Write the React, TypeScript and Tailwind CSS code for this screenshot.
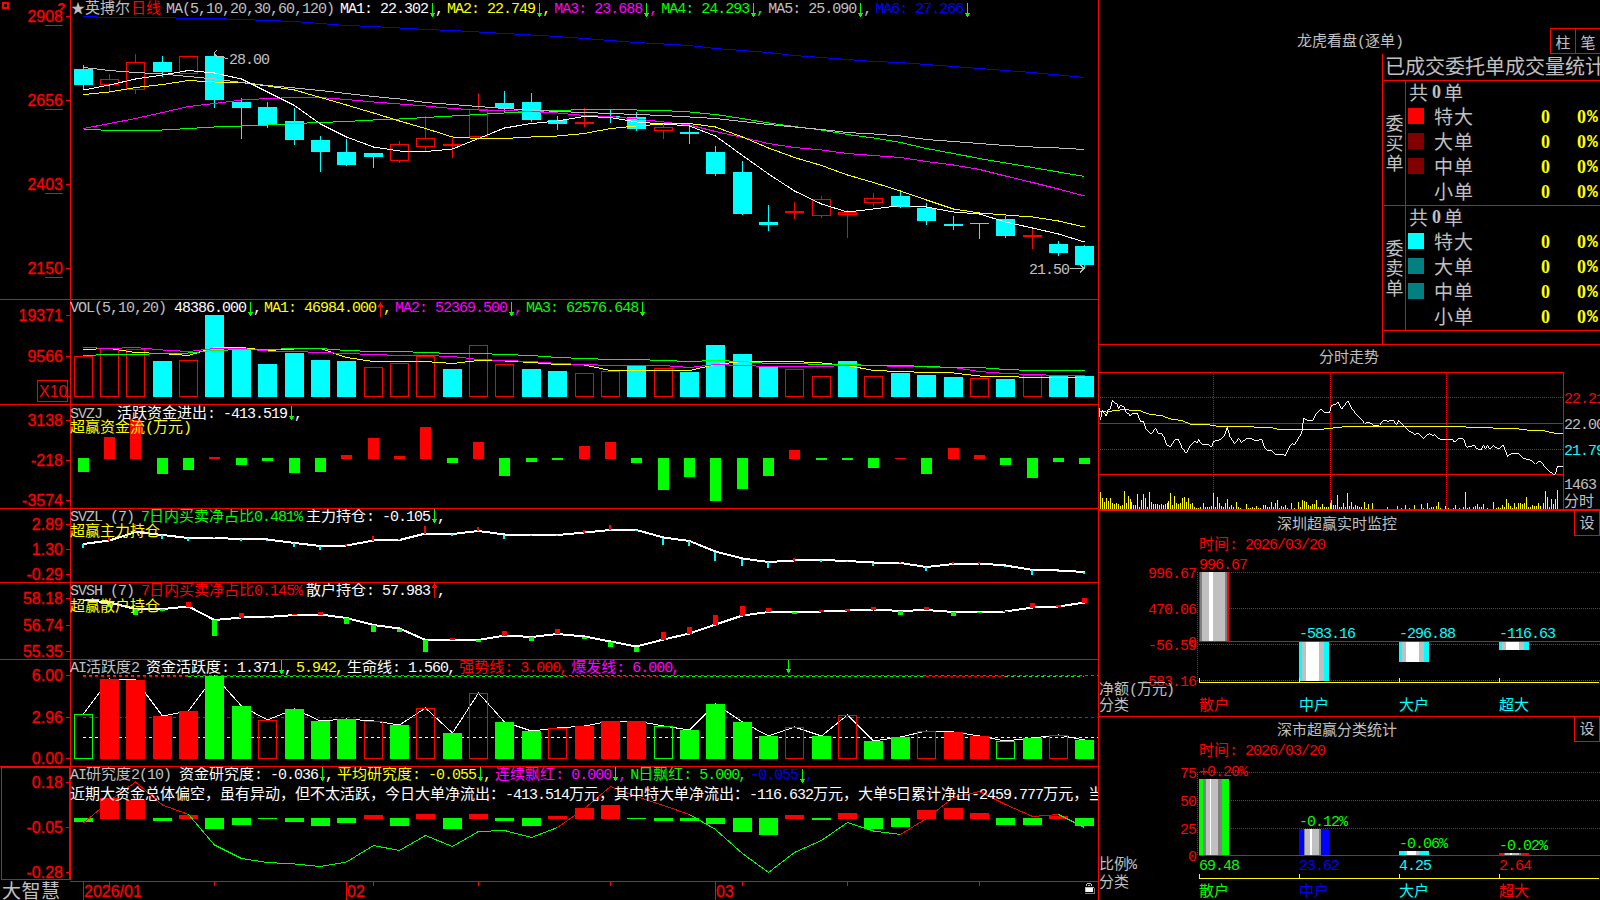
import { Fragment, type ReactNode } from "react";
import clsx from "clsx";

const RED = "#ff0000";
const GREEN = "#00ff00";
const CYAN = "#00ffff";
const YELLOW = "#ffff00";
const MAGENTA = "#ff00ff";
const BLUE = "#0000ff";
const GREY = "#c0c0c0";
const DARK = "#808080";
const WHITE = "#ffffff";

// left edge of each trading day's column
const columns = [74, 100, 126, 153, 179, 205, 232, 258, 285, 311, 337, 364, 390, 416, 443, 469, 495, 522, 548, 575, 601, 627, 654, 680, 706, 733, 759, 785, 812, 838, 864, 891, 917, 944, 970, 996, 1023, 1049, 1075];
const STEP = 26.335;
const left = (i: number) => columns[i];
const mid = (i: number) => left(i) + 9.5;

// [body top, body bottom, wick top, wick bottom, rising]
const candles = [
  [69, 85, 65, 90, 0], [79, 85, 74, 92, 1], [62, 90, 54, 94, 1], [62, 72, 56, 77, 0], [56, 74, 56, 74, 1],
  [56, 100, 53, 108, 0], [102, 108, 98, 139, 0], [107, 125, 102, 128, 0], [121, 140, 108, 145, 0], [140, 152, 136, 172, 0],
  [152, 165, 139, 166, 0], [153, 157, 153, 168, 0], [144, 161, 141, 163, 1], [138, 147, 116, 151, 1], [144, 146, 138, 158, 1],
  [109, 137, 93, 140, 1], [103, 108, 91, 113, 0], [102, 120, 93, 122, 0], [120, 124, 116, 130, 0], [122, 124, 108, 127, 1],
  [116, 117, 110, 123, 0], [117, 129, 112, 131, 0], [127, 131, 124, 139, 1], [132, 134, 126, 144, 0], [152, 174, 146, 176, 0],
  [172, 214, 161, 215, 0], [222, 225, 205, 231, 0], [211, 213, 202, 219, 1], [199, 216, 196, 218, 1], [212, 215, 210, 238, 1],
  [198, 203, 193, 206, 1], [196, 207, 191, 208, 0], [208, 221, 203, 225, 0], [224, 226, 216, 230, 0], [223, 224, 223, 239, 0],
  [219, 236, 216, 238, 0], [235, 237, 229, 249, 1], [244, 253, 241, 256, 0], [246, 265, 245, 269, 0],
];

const ma5 = [90, 85, 79, 75, 70.5, 73, 79, 92, 105.5, 124, 137, 147, 151, 151.5, 149, 138.5, 128, 123.5, 121, 116.5, 117.5, 122, 124, 126, 136, 155.5, 174, 191, 204, 212, 209, 205.5, 207, 212, 214, 222, 228, 234, 242];
const ma10 = [94.5, 92, 87.5, 84.5, 80.5, 82, 82.5, 86, 90, 97.5, 105, 113, 121, 128.5, 137, 138.5, 138.5, 137, 136, 133.5, 128.5, 126, 124, 123.5, 127, 137, 148, 157.5, 165.5, 175, 182.5, 191, 200, 209, 213, 215, 217, 221, 227];
const ma20 = [128.5, 123.5, 118.5, 112.5, 106.5, 103.5, 100, 98.5, 97.5, 97.5, 99.5, 102, 104, 106, 108.5, 110, 110.5, 111.5, 113, 115.5, 116.5, 119, 122, 125, 131.5, 137.5, 143.5, 147.5, 150, 153.5, 155.5, 157.5, 161.5, 165, 169.5, 176, 182.5, 189, 196];
const ma30 = [129, 130.5, 130.5, 130, 128.5, 127, 126, 125, 123.5, 122.5, 121.5, 120, 119, 117.5, 116, 114.5, 113, 111.5, 110.5, 109.5, 109.5, 110, 110.5, 112, 114.5, 118.5, 123, 126.5, 130, 134.5, 138, 142.5, 148.5, 153.5, 158.5, 163, 167.5, 172, 176.5];
const ma60 = [67.5, 70.5, 72.5, 74, 76.5, 79, 82.5, 85.5, 88, 90.5, 93.5, 96.5, 99, 102.5, 104.5, 106.5, 108.5, 110, 111.5, 112.5, 113.5, 114.5, 115.5, 117, 118.5, 121.5, 124.5, 127, 129.5, 132.5, 134, 136, 139.5, 141.5, 143.5, 145.5, 147, 148, 149.5];
const ma120 = [16.5, 17.5, 17.5, 17.5, 18.5, 18.5, 19.5, 20.5, 21.5, 23.5, 25.5, 26.5, 28, 29.5, 30.5, 32, 33.5, 35, 36.5, 38.5, 40.5, 42.5, 44, 45.5, 48.5, 50.5, 52.5, 55.5, 57.5, 59.5, 61.5, 62.5, 64.5, 66.5, 68.5, 70.5, 72.5, 75, 77.5];

const volTop = [356, 348, 349, 361, 360, 315, 349, 364, 353, 360, 361, 367, 363, 356, 369, 345, 364, 369, 371, 373, 371, 366, 368, 372, 345, 354, 367, 369, 376, 361, 376, 373, 375, 377, 378, 379, 375, 376, 376];
// 1 is a rising day
const volUp = "111010000001110110011010000110100010100";
const vol5 = [349.5, 348.5, 352.5, 353.5, 355.5, 347.5, 347.5, 350.5, 349, 348.5, 357.5, 361.5, 361.5, 361.5, 363.5, 360.5, 361, 362.5, 364.5, 365, 370.5, 370.5, 370.5, 370.5, 364.5, 361.5, 361.5, 361.5, 363, 365.5, 370.5, 371.5, 372.5, 373, 376, 376.5, 377.5, 377.5, 377.5];
const vol10 = [347.5, 348.5, 347.5, 350, 351.5, 348.5, 348.5, 351, 351.5, 352.5, 353.5, 354.5, 355.5, 355.5, 356.5, 359.5, 360.5, 361.5, 363.5, 364.5, 365.5, 365.5, 365.5, 367.5, 364.5, 365.5, 366.5, 366.5, 366.5, 365.5, 365.5, 366.5, 367, 367.5, 371.5, 373.5, 374.5, 375.5, 375.5];
const vol20 = [355.5, 354.5, 354.5, 353.5, 353, 350.5, 349.5, 349.5, 348.5, 348.5, 350.5, 351.5, 351.5, 352.5, 353.5, 353.5, 354.5, 355.5, 357.5, 358.5, 359.5, 359.5, 360.5, 361.5, 360.5, 361.5, 363.5, 363.5, 364.5, 364.5, 365.5, 365.5, 366.5, 367.5, 367.5, 369.5, 370.5, 370.5, 370.5];

const flow = [472, 437, 420, 474, 470, 457, 465, 461, 473, 472, 455, 438, 456, 427, 463, 442, 476, 462, 460, 446, 442, 463, 490, 477, 501, 489, 476, 450, 460, 460, 468, 458, 474, 448, 455, 465, 478, 462, 464];

const mainLine = [544, 540.5, 532, 535, 538, 538, 539, 539.5, 543, 546, 545.5, 540.5, 540, 533.5, 534, 531, 534.5, 535, 535, 532.5, 530, 530, 537.5, 541, 551.5, 558.5, 562, 560.5, 560, 561, 562.5, 563, 567, 564, 563.5, 565.5, 570, 570.5, 572];
const mainTick = [548, 536, 524, 539, 541, 536.5, 541, 541, 547, 550, 544, 536, 538.5, 526, 536, 527, 539, 536, 536, 530, 525, 531, 545, 546, 561, 566, 568, 558, 562, 562, 566, 562, 571, 562, 562, 567, 575, 572, 574];

const retailLine = [600, 602.5, 609, 609, 606.5, 620, 617.5, 617, 615, 614.5, 618, 625, 628.5, 640, 640, 640, 635.5, 637, 634, 636.5, 641.5, 646.5, 639.5, 633.5, 624.5, 615.5, 612, 612, 611.5, 610.5, 609.5, 611, 610, 612, 612, 611.5, 607.5, 606.5, 602.5];
const retailTick = [598.5, 606.5, 615, 611, 602, 636, 613, 618, 613.5, 612, 624, 632, 632, 652, 638, 642, 631, 641, 629, 639, 647, 652, 632, 627, 615, 606, 608, 614, 610, 609, 607, 615, 607, 616, 613, 611, 603, 605, 598];

// R/G are filled bars, r/g are outlined
const activeKind = "gRRRRGGrGGGrGrGrGGrRRRgGGGGrGrGGrRRgGrG";
const activeTop = [714, 679, 680, 716, 711, 676, 706, 720, 709, 721, 719, 721, 725, 708, 733, 693, 722, 731, 728, 726, 721, 721, 726, 730, 704, 722, 736, 727, 736, 715, 741, 737, 731, 732, 736, 741, 738, 735, 740];

const research = [822, 798, 800, 821, 815, 829, 825, 819, 822, 826, 823, 815, 826, 814, 829, 814, 821, 826, 816, 808, 805, 819, 821, 821, 824, 832, 835, 815, 820, 813, 829, 827, 810, 808, 813, 825, 825, 816, 826];
const researchLine = [823, 801, 782, 805, 814.5, 845, 858.5, 862.5, 864, 866.5, 862, 845.5, 850.5, 835.5, 846.5, 831.5, 830.5, 837.5, 827.5, 808.5, 786.5, 796.5, 805.5, 814.5, 829.5, 853.5, 872.5, 852.5, 840.5, 822.5, 831, 834.5, 818.5, 797.5, 791.5, 804.5, 816.5, 814.5, 827.5];
const researchRuns: [number, number, string][] = [
  [0, 4, RED], [4, 18, GREEN], [18, 23, RED], [23, 31, GREEN], [31, 37, RED], [37, 38, GREEN],
];
const burstRuns: [number, number, string][] = [
  [0, 4, RED], [4, 18.3, GREEN], [18.3, 22, RED], [22, 32, GREEN], [32, 35, RED], [35, 38, GREEN],
];

// intraday series, three units per pixel
const price = "27,205 31,241 37,211 43,220 49,228 55,208 60,208 67,182 75,188 82,193 86,206 92,196 103,202 110,220 116,220 121,229 128,220 142,220 151,244 160,244 168,268 184,283 196,265 205,280 214,280 224,295 230,316 236,316 241,322 253,301 265,297 277,325 289,340 300,319 308,310 316,302 320,310 326,298 335,313 356,313 365,322 371,304 394,298 405,283 412,262 420,290 434,311 446,295 455,308 468,296 485,295 493,302 516,299 524,325 535,332 545,332 557,343 580,343 586,348 596,325 605,311 614,314 627,292 635,280 641,235 652,241 668,241 680,220 693,208 703,218 719,217 724,196 736,193 745,187 755,208 765,194 773,182 783,202 796,220 812,236 824,250 837,246 853,258 868,256 876,247 884,240 892,244 910,241 920,256 926,241 940,256 955,272 975,283 984,280 1000,295 1018,280 1026,286 1036,284 1045,296 1070,300 1087,297 1092,307 1105,296 1120,296 1130,322 1154,316 1160,326 1174,330 1180,314 1187,326 1193,316 1200,328 1210,316 1222,326 1231,324 1240,314 1252,349 1265,340 1284,340 1300,355 1325,361 1337,373 1345,364 1354,366 1368,385 1390,403 1396,403 1402,379 1418,379";
const average = "27,214 42,214 50,217 63,214 75,211 90,210 110,208 120,211 150,212 165,218 180,223 215,227 245,238 275,241 300,252 355,254 385,259 440,260 540,262 565,268 630,270 695,268 720,265 775,259 1120,259 1130,262 1205,264 1270,265 1310,270 1355,271 1395,280 1418,280";
const ticks = "31:456,37:474,43:486,49:474,55:484,61:474,67:488,73:492,79:490,85:492,91:497,97:494,103:453,109:490,115:468,121:478,125:486,131:495,137:495,142:462,148:501,154:480,160:462,166:474,172:501,178:456,184:486,190:492,196:492,202:492,208:495,214:492,220:495,226:492,232:490,236:484,242:459,248:495,254:468,260:490,266:492,272:490,278:474,284:471,290:486,296:474,302:492,308:490,314:501,320:504,326:504,332:500,340:489,346:502,352:500,358:501,364:498,370:459,376:500,382:471,388:489,394:499,400:500,406:490,412:477,418:500,424:496,430:501,439:486,445:502,451:504,470:492,476:504,482:504,488:500,494:503,500:499,506:504,512:504,520:495,526:494,532:500,538:502,544:486,550:500,556:490,562:480,568:504,574:498,580:502,586:494,592:503,604:489,614:504,625:486,631:500,637:480,643:484,649:486,655:496,661:499,667:493,673:491,679:480,685:500,691:500,697:492,703:502,709:500,715:500,721:489,725:480,731:494,737:494,743:465,749:502,755:500,761:489,767:500,773:459,779:498,785:486,791:500,797:494,803:499,809:501,815:502,823:486,829:503,835:492,848:489,894:502,922:498,934:504,948:495,960:504,975:495,994:492,1000:504,1012:489,1018:503,1024:502,1030:501,1040:497,1046:486,1052:504,1066:498,1075:504,1090:504,1096:495,1108:504,1120:501,1126:456,1132:503,1138:501,1150:500,1156:498,1162:492,1168:502,1174:500,1180:492,1192:504,1210:486,1220:504,1225:500,1231:503,1237:496,1243:500,1249:477,1255:489,1261:499,1267:504,1273:489,1279:502,1285:490,1291:490,1297:492,1303:489,1309:471,1315:500,1321:502,1327:495,1333:497,1339:498,1345:489,1351:498,1360:489,1366:453,1372:471,1378:500,1384:477,1390:492,1396:477,1402:450"
  .split(",")
  .map((pair) => pair.split(":").map(Number));

const mono = "font-['Liberation_Mono','Noto_Sans_CJK_SC',monospace]";
const cjk = "font-['Noto_Sans_CJK_SC',sans-serif]";

// Half-width runs sit on an 8px grid, full-width runs on a 15px grid
const Runs = ({ text }: { text: string }) => (
  <>
    {text.split(/([\u3000-\uffef]+)/).map((run, i) => (
      <Fragment key={i}>
        {i % 2 ? (
          <span className={cjk}>{run}</span>
        ) : (
          <span className="tracking-[-1px]">{run}</span>
        )}
      </Fragment>
    ))}
  </>
);

const Arrow = ({ up }: { up?: boolean }) => (
  <svg viewBox="0 0 8 15" className="h-[15px] w-2 shrink-0 self-center" shapeRendering="crispEdges">
    {up ? (
      <path d="M4 0h1v15h-1zM3 2h3v1h-3zM2 3h5v2h-5z" fill={RED} />
    ) : (
      <path d="M4 0h1v14h-1zM2 10h5v1h-5zM3 11h3v2h-3z" fill={GREEN} />
    )}
  </svg>
);

type Item = { text: string; color: string; arrow?: "up" | "down"; gap?: string; comma?: boolean };

const Legend = ({ items, className }: { items: Item[]; className?: string }) => (
  <div className={clsx("absolute left-[70px] flex h-4 items-baseline whitespace-pre text-[15px] leading-4", mono, className)}>
    {items.map((item) => (
      <div key={item.text} className={clsx("flex items-baseline", item.color, item.gap ?? "ml-[3px]")}>
        <span>
          <Runs text={item.text} />
        </span>
        {item.arrow && <Arrow up={item.arrow === "up"} />}
        {item.comma !== false && <span className="-ml-px w-[9px]">,</span>}
      </div>
    ))}
  </div>
);

const Panel = ({ top, height, className, children, overlay }: {
  top: number;
  height: number;
  className: string;
  children: ReactNode;
  overlay?: ReactNode;
}) => (
  <section className={clsx("relative shrink-0 overflow-hidden border-b border-[#ff0000]", className)}>
    <svg viewBox={`0 ${top} 1098 ${height}`} width={1098} height={height} className="block" shapeRendering="crispEdges">
      <rect x={70} y={top} width={1} height={height} fill={RED} />
      {children}
    </svg>
    {overlay}
  </section>
);

const Scale = ({ marks }: { marks: [string, number][] }) => (
  <g fill={RED}>
    {marks.map(([label, y]) => (
      <g key={label}>
        <rect x={66} y={y} width={4} height={1} />
        <text
          x={63}
          y={y + 6}
          textAnchor="end"
          stroke={RED}
          strokeWidth={0.3}
          className="font-['Liberation_Sans',sans-serif] text-[16px]"
        >
          {label}
        </text>
      </g>
    ))}
  </g>
);

const Line = ({ data, color, width = 1, from = 0 }: { data: number[]; color: string; width?: number; from?: number }) => (
  <polyline points={data.map((y, i) => `${mid(from + i)},${y}`).join(" ")} fill="none" stroke={color} strokeWidth={width} />
);

const Box = ({ x, y, w, h, color, hollow }: { x: number; y: number; w: number; h: number; color: string; hollow?: boolean }) =>
  hollow ? (
    <rect x={x + 0.5} y={y + 0.5} width={w - 1} height={h - 1} fill="none" stroke={color} />
  ) : (
    <rect x={x} y={y} width={w} height={h} fill={color} />
  );

const PricePanel = () => (
  <Panel
    top={0}
    height={299}
    className="h-[300px]"
    overlay={
      <Legend
        className="-top-px"
        items={[
          { text: "★", color: "text-[#c0c0c0]", gap: "ml-px w-[14px] text-[14px]", comma: false },
          { text: "英搏尔", color: "text-[#c0c0c0]", gap: "", comma: false },
          { text: "日线", color: "text-[#ff0000]", gap: "ml-px", comma: false },
          { text: "MA(5,10,20,30,60,120)", color: "text-[#c0c0c0]", gap: "ml-[5px]", comma: false },
          { text: "MA1: 22.302", color: "text-white", arrow: "down", gap: "ml-[6px]" },
          { text: "MA2: 22.749", color: "text-[#ffff00]", arrow: "down" },
          { text: "MA3: 23.688", color: "text-[#ff00ff]", arrow: "down" },
          { text: "MA4: 24.293", color: "text-[#00ff00]", arrow: "down" },
          { text: "MA5: 25.090", color: "text-[#c0c0c0]", arrow: "down" },
          { text: "MA6: 27.266", color: "text-[#0000ff]", arrow: "down", comma: false },
        ]}
      />
    }
  >
    <Scale marks={[["2908", 16], ["2656", 100], ["2403", 184], ["2150", 268]]} />
    {[25, 109, 193, 277].map((y) => (
      <rect key={y} x={45} y={y} width={18} height={1} fill={RED} />
    ))}
    <path d="M3 3h5v5h-5z" fill="none" stroke={RED} strokeWidth={2} />
    <text x={57} y={13} fill={RED} className="font-['Liberation_Sans',sans-serif] text-[14px] font-bold">?</text>
    {candles.map(([a, b, c, d, up], i) => {
      const color = up ? RED : CYAN;
      return (
        <g key={i}>
          {up ? (
            <>
              <rect x={left(i) + 9} y={c} width={1} height={a - c} fill={color} />
              <rect x={left(i) + 9} y={b} width={1} height={d - b} fill={color} />
            </>
          ) : (
            <rect x={left(i) + 9} y={c} width={1} height={d - c} fill={color} />
          )}
          <Box x={left(i)} y={a} w={19} h={b - a} color={color} hollow={!!up && b - a > 2} />
        </g>
      );
    })}
    <Line data={ma120} color={BLUE} />
    <Line data={ma30} color={GREEN} />
    <Line data={ma20} color={MAGENTA} />
    <Line data={ma10} color={YELLOW} />
    <Line data={ma60} color={GREY} />
    <Line data={ma5} color={WHITE} />
    <g fill="none" stroke={GREY}>
      <path d="M228 58h-3l-4-2h-4l-3-3M217 50l-3 3 3 5" />
      <path d="M1070 268.5h14M1080 264.5l4 4-4 4" />
    </g>
    <g fill={GREY} className={clsx(mono, "text-[15px] tracking-[-1px]")}>
      <text x={229} y={64}>28.00</text>
      <text x={1029} y={274}>21.50</text>
    </g>
  </Panel>
);

const VolumePanel = () => (
  <Panel
    top={300}
    height={104}
    className="h-[105px]"
    overlay={
      <Legend
        className="top-px"
        items={[
          { text: "VOL(5,10,20)", color: "text-[#c0c0c0]", gap: "", comma: false },
          { text: "48386.000", color: "text-white", arrow: "down", gap: "ml-2" },
          { text: "MA1: 46984.000", color: "text-[#ffff00]", arrow: "up", gap: "ml-[2px]" },
          { text: "MA2: 52369.500", color: "text-[#ff00ff]", arrow: "down" },
          { text: "MA3: 62576.648", color: "text-[#00ff00]", arrow: "down", comma: false },
        ]}
      />
    }
  >
    <Scale marks={[["19371", 315], ["9566", 356]]} />
    <rect x={66} y={396} width={4} height={1} fill={RED} />
    <Box x={37} y={380} w={31} h={22} color={RED} hollow />
    <text x={39} y={397} fill={RED} className="font-['Liberation_Sans',sans-serif] text-[16px]">X10</text>
    {volTop.map((y, i) => (
      <Box key={i} x={left(i)} y={y} w={19} h={397 - y} color={volUp[i] === "1" ? RED : CYAN} hollow={volUp[i] === "1"} />
    ))}
    <Line data={vol5} color={YELLOW} />
    <Line data={vol10} color={MAGENTA} />
    <Line data={vol20} color={GREEN} />
  </Panel>
);

const FlowPanel = () => (
  <Panel
    top={405}
    height={103}
    className="h-[104px]"
    overlay={
      <>
        <Legend
          className="-top-px"
          items={[
            { text: "SVZJ", color: "text-[#c0c0c0]", gap: "", comma: false },
            { text: "活跃资金进出: -413.519", color: "text-white", arrow: "down", gap: "ml-[15px]" },
          ]}
        />
        <Legend className="top-[13px]" items={[{ text: "超赢资金流(万元)", color: "text-[#ffff00]", gap: "", comma: false }]} />
      </>
    }
  >
    <Scale marks={[["3138", 420], ["-218", 460], ["-3574", 500]]} />
    {flow.map((y, i) =>
      y >= 460 ? (
        <rect key={i} x={left(i) + 4} y={458} width={11} height={y - 458} fill={GREEN} />
      ) : (
        <rect key={i} x={left(i) + 4} y={y} width={11} height={459 - y} fill={RED} />
      ),
    )}
  </Panel>
);

const MainForcePanel = () => (
  <Panel
    top={509}
    height={73}
    className="h-[74px]"
    overlay={
      <>
        <Legend
          className="-top-[2px]"
          items={[
            { text: "SVZL (7)", color: "text-[#c0c0c0]", gap: "", comma: false },
            { text: "7日内买卖净占比0.481%", color: "text-[#00ff00]", gap: "ml-[7px]", comma: false },
            { text: "主力持仓: -0.105", color: "text-white", arrow: "down", gap: "ml-1" },
          ]}
        />
        <Legend className="top-[13px]" items={[{ text: "超赢主力持仓", color: "text-[#ffff00]", gap: "", comma: false }]} />
      </>
    }
  >
    <Scale marks={[["2.89", 524], ["1.30", 549], ["-0.29", 574]]} />
    <Line data={mainLine} color={WHITE} width={2} />
    {mainTick.map((y, i) => {
      const base = mainLine[i];
      return (
        <rect
          key={i}
          x={left(i) + 8}
          y={Math.min(y, base)}
          width={2}
          height={Math.abs(y - base)}
          fill={y > base ? CYAN : RED}
        />
      );
    })}
  </Panel>
);

const RetailPanel = () => (
  <Panel
    top={583}
    height={76}
    className="h-[77px]"
    overlay={
      <>
        <Legend
          className="-top-[2px]"
          items={[
            { text: "SVSH (7)", color: "text-[#c0c0c0]", gap: "", comma: false },
            { text: "7日内买卖净占比0.145%", color: "text-[#ff0000]", gap: "ml-[7px]", comma: false },
            { text: "散户持仓: 57.983", color: "text-white", arrow: "up", gap: "ml-1" },
          ]}
        />
        <Legend className="top-[14px]" items={[{ text: "超赢散户持仓", color: "text-[#ffff00]", gap: "", comma: false }]} />
      </>
    }
  >
    <Scale marks={[["58.18", 598], ["56.74", 625], ["55.35", 651]]} />
    <Line data={retailLine} color={WHITE} width={2} />
    {retailTick.map((y, i) => {
      const base = retailLine[i];
      return (
        <rect
          key={i}
          x={left(i) + 7}
          y={Math.min(y, base)}
          width={5}
          height={Math.abs(y - base)}
          fill={y > base ? GREEN : RED}
        />
      );
    })}
  </Panel>
);

const ActivityPanel = () => (
  <Panel
    top={660}
    height={106}
    className="h-[107px]"
    overlay={
      <Legend
        className="-top-[2px]"
        items={[
          { text: "AI活跃度2", color: "text-[#c0c0c0]", gap: "", comma: false },
          { text: "资金活跃度: 1.371", color: "text-white", arrow: "down", gap: "ml-[7px]" },
          { text: "5.942", color: "text-[#ffff00]" },
          { text: "生命线: 1.560", color: "text-white" },
          { text: "强势线: 3.000", color: "text-[#ff0000]" },
          { text: "爆发线: 6.000", color: "text-[#ff00ff]" },
          { text: "", color: "text-white", arrow: "down", gap: "ml-[104px] self-center", comma: false },
        ]}
      />
    }
  >
    <Scale marks={[["6.00", 675], ["2.96", 717], ["0.00", 758]]} />
    <path d="M83 675.5H1098" stroke={MAGENTA} strokeDasharray="3 3" />
    {burstRuns.map(([a, b, color]) => (
      <path key={a} d={`M${Math.round(83 + a * STEP)} 676.5H${Math.round(83 + b * STEP)}`} stroke={color} strokeDasharray="3 3" />
    ))}
    <path d="M83 717.5H1098" stroke={RED} strokeDasharray="3 3" />
    <path d="M83 737.5H1098" stroke={WHITE} strokeDasharray="3 3" />
    <Line data={activeTop} color={WHITE} />
    {activeTop.map((y, i) => {
      const kind = activeKind[i];
      return (
        <Box
          key={i}
          x={left(i)}
          y={y}
          w={19}
          h={759 - y}
          color={kind.toLowerCase() === "r" ? RED : GREEN}
          hollow={kind === kind.toLowerCase()}
        />
      );
    })}
  </Panel>
);

const ResearchPanel = () => (
  <Panel
    top={767}
    height={113}
    className="h-[114px] border-b-0"
    overlay={
      <>
        <Legend
          className="-top-[2px]"
          items={[
            { text: "AI研究度2(10)", color: "text-[#c0c0c0]", gap: "", comma: false },
            { text: "资金研究度: -0.036", color: "text-white", arrow: "down", gap: "ml-2" },
            { text: "平均研究度: -0.055", color: "text-[#ffff00]", arrow: "down" },
            { text: "连续飘红: 0.000", color: "text-[#ff00ff]", arrow: "down" },
            { text: "N日飘红: 5.000", color: "text-[#00ff00]" },
            { text: "-0.055", color: "text-[#0000ff]", arrow: "down" },
          ]}
        />
        <Legend
          className="top-[18px]"
          items={[
            {
              text: "近期大资金总体偏空，虽有异动，但不太活跃，今日大单净流出：-413.514万元，其中特大单净流出：-116.632万元，大单5日累计净出-2459.777万元，当",
              color: "text-white",
              gap: "",
              comma: false,
            },
          ]}
        />
      </>
    }
  >
    <rect x={1.5} y={767.5} width={68} height={112} fill="none" stroke={RED} />
    <Scale marks={[["0.18", 782], ["-0.05", 827], ["-0.28", 872]]} />
    {research.map((y, i) =>
      y >= 819 ? (
        <rect key={i} x={left(i)} y={818} width={19} height={y - 818} fill={GREEN} />
      ) : (
        <rect key={i} x={left(i)} y={y} width={19} height={819 - y} fill={RED} />
      ),
    )}
    {researchRuns.map(([a, b, color]) => (
      <Line key={a} data={researchLine.slice(a, b + 1)} from={a} color={color} />
    ))}
  </Panel>
);

const DateAxis = () => (
  <footer className="flex h-5 shrink-0">
    <div className={clsx("w-[70px] whitespace-nowrap pl-[2px] text-[19px] leading-[17px] tracking-[0.5px] text-[#c0c0c0]", cjk)}>大智慧</div>
    <svg viewBox="70 880 1028 20" width={1028} height={20} shapeRendering="crispEdges">
      <rect x={70} y={880} width={1028} height={1} fill={RED} />
      {[83, 346, 715].map((x) => (
        <rect key={x} x={x} y={881} width={1} height={19} fill={RED} />
      ))}
      {[109, 214, 373, 478, 610, 742, 847, 979].map((x) => (
        <rect key={x} x={x} y={881} width={1} height={4} fill={RED} />
      ))}
      <g fill={RED} stroke={RED} strokeWidth={0.3} className="font-['Liberation_Sans',sans-serif] text-[16px]">
        <text x={84} y={896}>2026/01</text>
        <text x={347} y={896}>02</text>
        <text x={716} y={896}>03</text>
      </g>
      <path d="M1086 887h7v4h-7z" fill={WHITE} />
      <path d="M1085 886h9v1h-9zM1085 887h1v4h-1zM1086 883h1v2h-1zM1087 882h4v1h-4zM1091 883h1v2h-1zM1088 884h2v1h-2z" fill={GREY} />
      <path d="M1094 887h1v6h-10v-1h9z" fill={DARK} />
    </svg>
  </footer>
);

const serifBold = "font-['Liberation_Serif',serif] text-[18px] font-bold";

const OrderSection = ({ side, colors }: { side: string; colors: string[] }) => (
  <div className="ml-px flex h-[125px] border-t border-[#ff0000]">
    <div className="flex w-[21px] flex-col items-center justify-center pb-[3px] text-[18px] leading-5">
      {side.split("").map((ch) => (
        <span key={ch}>{ch}</span>
      ))}
    </div>
    <div className="flex flex-1 flex-col border-l border-[#ff0000] leading-5">
      <div className="flex h-[23px] items-center pb-[2px] pl-[3px] text-[19px]">
        <span>共</span>
        <span className={clsx("w-4 pl-px text-center", serifBold)}>0</span>
        <span>单</span>
      </div>
      {["特大", "大单", "中单", "小单"].map((name, i) => (
        <div key={name} className="flex h-[25px] items-center pl-[2px]">
          <span className={clsx("mb-px h-4 w-4", colors[i])} />
          <span className="ml-[10px] w-[107px] pb-[2px] text-[19px] tracking-[1px]">{name}</span>
          <span className={clsx("w-9 text-[#ffff00]", serifBold)}>0</span>
          <span className={clsx("text-[#ffff00]", serifBold)}>0</span>
          <span className="ml-px font-['Liberation_Mono',monospace] text-[18px] font-bold text-[#ffff00]">%</span>
        </div>
      ))}
    </div>
  </div>
);

const OrderPanel = () => (
  <section className={clsx("flex h-[345px] shrink-0 flex-col border-b border-[#ff0000] text-[#c0c0c0]", cjk)}>
    <header className="flex h-[54px] shrink-0 items-end">
      <h2 className={clsx("ml-[198px] whitespace-pre pb-[3px] text-[15px] leading-4", mono)}>
        <Runs text="龙虎看盘(逐单)" />
      </h2>
      <div className="ml-auto flex border-y border-l border-[#ff0000] text-[15px]">
        <button className="h-6 w-6 leading-[21px]">柱</button>
        <button className="h-6 w-[25px] border-l border-[#ff0000] leading-[21px]">笔</button>
      </div>
    </header>
    <div className="ml-[283px] flex-1 border-l border-[#ff0000]">
      <h3 className="h-[26px] overflow-hidden whitespace-nowrap pl-[2px] text-[20px] leading-[23px]">已成交委托单成交量统计</h3>
      <OrderSection side="委买单" colors={["bg-[#ff0000]", "bg-[#800000]", "bg-[#800000]", ""]} />
      <OrderSection side="委卖单" colors={["bg-[#00ffff]", "bg-[#008080]", "bg-[#008080]", ""]} />
      <div className="ml-px border-t border-[#ff0000]" />
    </div>
  </section>
);

const IntradayPanel = () => (
  <section className="flex h-[166px] shrink-0 flex-col border-b-2 border-[#ff0000]">
    <h2 className={clsx("h-[27px] pl-[220px] text-[15px] leading-[22px] text-[#c0c0c0]", cjk)}>分时走势</h2>
    <svg viewBox="1099 372 501 137" width={501} height={137} shapeRendering="crispEdges">
      <g stroke={RED}>
        <path d="M1099 372.5H1563M1563.5 372V509M1099 423.5H1563M1099 474.5H1563" />
        <path d="M1100 397.5H1563M1100 449.5H1563M1213.5 374V509M1330.5 374V509M1446.5 374V509" strokeDasharray="1 1" />
      </g>
      <g transform="translate(1090 340) scale(0.33333)" fill="none">
        {ticks.map(([x, y]) => (
          <rect key={x} x={x - 1.5} y={y} width={3} height={507 - y} fill={YELLOW} />
        ))}
        <polyline points={average} stroke={YELLOW} strokeWidth={3} />
        <polyline points={price} stroke={WHITE} strokeWidth={3} />
      </g>
      <g className={clsx(mono, "text-[15px] tracking-[-1px]")}>
        <text x={1564} y={403} fill={RED}>22.21</text>
        <text x={1564} y={429} fill={GREY}>22.00</text>
        <text x={1564} y={455} fill={CYAN}>21.79</text>
        <text x={1564} y={489} fill={GREY}>1463</text>
      </g>
      <text x={1564} y={506} fill={GREY} className={clsx(cjk, "text-[15px]")}>分时</text>
    </svg>
  </section>
);

const TitleBar = ({ title }: { title: string }) => (
  <div className={clsx("flex h-[25px] shrink-0 text-[15px] leading-[23px] text-[#c0c0c0]", cjk)}>
    <h2 className="pl-[178px]">{title}</h2>
    <button className="ml-auto h-[25px] w-[26px] border-x border-b border-[#ff0000] pb-[3px] leading-[21px]">设</button>
  </div>
);

const Stripes = ({ x, y, h, parts }: { x: number; y: number; h: number; parts: [string, number][] }) => {
  let at = x;
  return (
    <g>
      {parts.map(([color, w], i) => {
        const start = at;
        at += w;
        return <rect key={i} x={start} y={y} width={w} height={h} fill={color} />;
      })}
    </g>
  );
};

const cyanParts: [string, number][] = [[CYAN, 3], [GREY, 4], [WHITE, 13], [GREY, 5], [CYAN, 5]];

const NetPanel = () => (
  <section className="flex h-[206px] shrink-0 flex-col border-b border-[#ff0000]">
    <TitleBar title="深圳超赢实时监控" />
    <svg viewBox="1099 536 501 180" width={501} height={180} shapeRendering="crispEdges">
      <g stroke={RED}>
        <path d="M1197 572.5H1600M1197 608.5H1600M1197 644.5H1600M1197 680.5H1600M1197.5 572V681" strokeDasharray="1 1" />
        <path d="M1199 641.5H1600" />
      </g>
      <Stripes x={1199} y={572} h={69} parts={[[RED, 1], [DARK, 2], [GREY, 7], [WHITE, 4], [GREY, 12], [DARK, 2], [RED, 2]]} />
      <Stripes x={1299} y={642} h={39} parts={cyanParts} />
      <Stripes x={1399} y={642} h={20} parts={cyanParts} />
      <Stripes x={1499} y={642} h={8} parts={cyanParts} />
      <path d="M1199.5 678V682.5H1599M1299.5 678V682M1399.5 678V682M1499.5 678V682" fill="none" stroke={YELLOW} />
      <g className={clsx(mono, "text-[15px] tracking-[-1px]")}>
        <g fill={RED}>
          <text x={1199} y={569}>996.67</text>
          <text x={1148} y={578}>996.67</text>
          <text x={1148} y={614}>470.06</text>
          <text x={1148} y={650}>-56.59</text>
          <text x={1140} y={686}>-583.16</text>
          <text x={1188} y={647}>0</text>
          <text x={1245} y={549}>2026/03/20</text>
          <text x={1229} y={549}>:</text>
        </g>
        <g fill={CYAN}>
          <text x={1299} y={638}>-583.16</text>
          <text x={1399} y={638}>-296.88</text>
          <text x={1499} y={638}>-116.63</text>
        </g>
        <g fill={GREY}>
          <text x={1129} y={694}>(</text>
          <text x={1166} y={694}>)</text>
        </g>
      </g>
      <g className={clsx(cjk, "text-[15px]")}>
        <text x={1199} y={549} fill={RED}>时间</text>
        <text x={1099} y={694} fill={GREY}>净额</text>
        <text x={1137} y={694} fill={GREY}>万元</text>
        <text x={1099} y={710} fill={GREY}>分类</text>
        <text x={1199} y={710} fill={RED}>散户</text>
        <text x={1299} y={710} fill={CYAN}>中户</text>
        <text x={1399} y={710} fill={CYAN}>大户</text>
        <text x={1499} y={710} fill={CYAN}>超大</text>
      </g>
    </svg>
  </section>
);

const SharePanel = () => (
  <section className="flex h-[183px] shrink-0 flex-col overflow-hidden">
    <TitleBar title="深市超赢分类统计" />
    <svg viewBox="1099 742 501 158" width={501} height={158} shapeRendering="crispEdges">
      <g stroke={RED}>
        <path d="M1197 772.5H1600M1197 800.5H1600M1197 828.5H1600M1197.5 772V855" strokeDasharray="1 1" />
      </g>
      <Stripes x={1199} y={779} h={76} parts={[[GREEN, 4], [DARK, 3], [GREY, 4], [WHITE, 1], [GREY, 7], [DARK, 4], [GREEN, 7]]} />
      <Stripes x={1299} y={829} h={26} parts={[[BLUE, 5], [DARK, 1], [GREY, 5], [WHITE, 2], [GREY, 7], [DARK, 2], [BLUE, 8]]} />
      <Stripes x={1399} y={851} h={4} parts={[[CYAN, 6], [GREY, 2], [WHITE, 9], [GREY, 3], [CYAN, 10]]} />
      <Stripes x={1499} y={853} h={2} parts={[[RED, 5], [DARK, 1], [GREY, 5], [WHITE, 2], [GREY, 7], [DARK, 2], [RED, 8]]} />
      <path d="M1199 855.5H1600" stroke={RED} />
      <path d="M1199.5 874V878.5H1599M1299.5 874V878M1399.5 874V878M1499.5 874V878" fill="none" stroke={YELLOW} />
      <g className={clsx(mono, "text-[15px] tracking-[-1px]")}>
        <g fill={RED}>
          <text x={1229} y={755}>:</text>
          <text x={1245} y={755}>2026/03/20</text>
          <text x={1199} y={776}>+0.20%</text>
          <text x={1180} y={778}>75</text>
          <text x={1180} y={806}>50</text>
          <text x={1180} y={834}>25</text>
          <text x={1188} y={861}>0</text>
          <text x={1499} y={870}>2.64</text>
        </g>
        <g fill={GREEN}>
          <text x={1299} y={826}>-0.12%</text>
          <text x={1399} y={848}>-0.06%</text>
          <text x={1499} y={850}>-0.02%</text>
          <text x={1199} y={870}>69.48</text>
        </g>
        <text x={1299} y={870} fill={BLUE}>23.62</text>
        <text x={1399} y={870} fill={CYAN}>4.25</text>
        <text x={1128} y={869} fill={GREY}>%</text>
      </g>
      <g className={clsx(cjk, "text-[15px]")}>
        <text x={1199} y={755} fill={RED}>时间</text>
        <text x={1099} y={869} fill={GREY}>比例</text>
        <text x={1099} y={887} fill={GREY}>分类</text>
        <text x={1199} y={896} fill={GREEN}>散户</text>
        <text x={1299} y={896} fill={BLUE}>中户</text>
        <text x={1399} y={896} fill={CYAN}>大户</text>
        <text x={1499} y={896} fill={RED}>超大</text>
      </g>
    </svg>
  </section>
);

const App = () => (
  <main className="flex h-[900px] w-[1600px] overflow-hidden bg-black">
    <div className="flex w-[1099px] shrink-0 flex-col border-r border-[#ff0000]">
      <PricePanel />
      <VolumePanel />
      <FlowPanel />
      <MainForcePanel />
      <RetailPanel />
      <ActivityPanel />
      <ResearchPanel />
      <DateAxis />
    </div>
    <div className="flex w-[501px] flex-col">
      <OrderPanel />
      <IntradayPanel />
      <NetPanel />
      <SharePanel />
    </div>
  </main>
);

export default App;
